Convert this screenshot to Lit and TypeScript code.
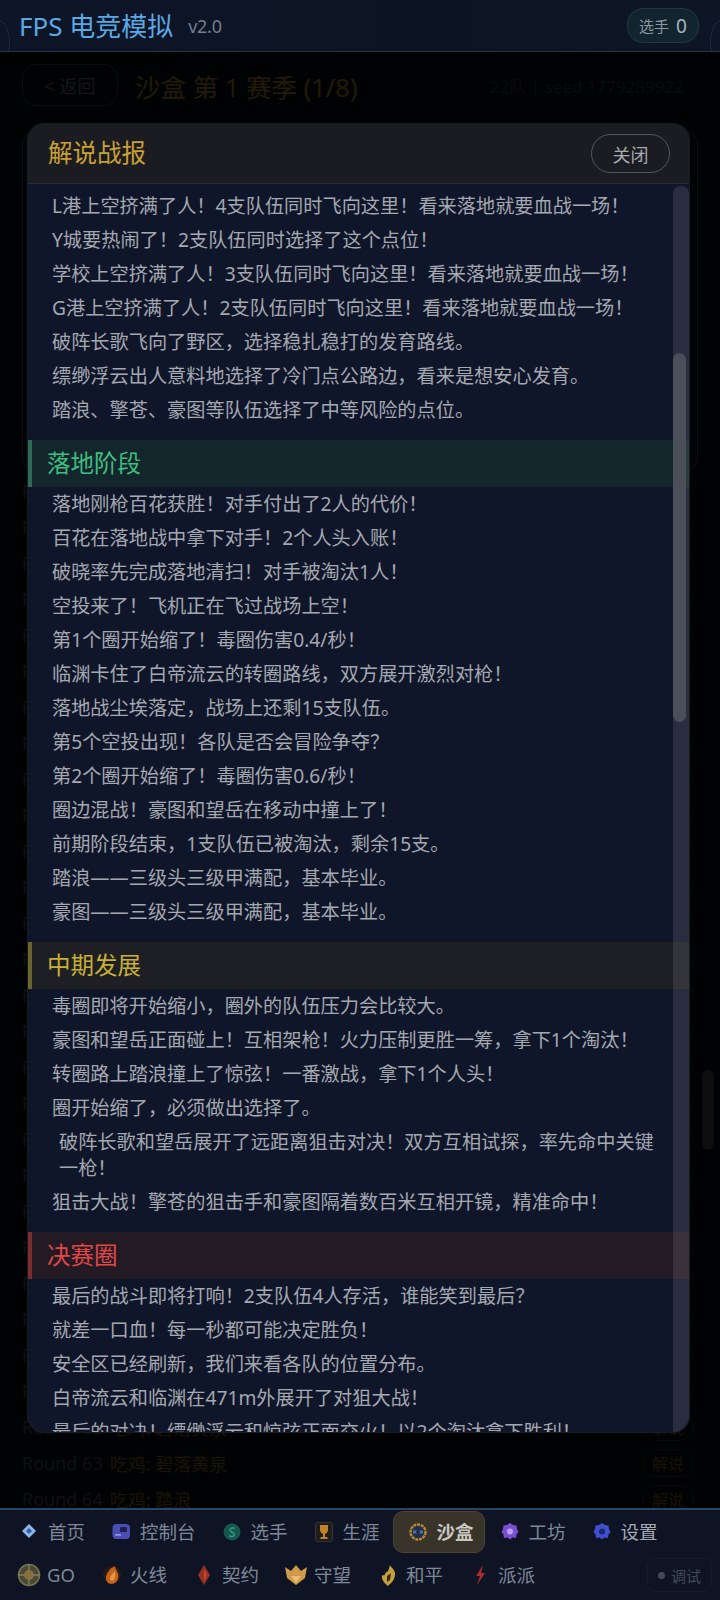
import { LitElement, html, css, svg } from "lit";
import { customElement } from "lit/decorators.js";

const ICONS: Record<string, unknown> = {
  home: svg`<path d="M9 2 16 9 9 16 2 9Z" fill="#8db6e6"/><path d="M9 6 12 9 9 12 6 9Z" fill="#2f5fa8"/>`,
  console: svg`<rect x="0.5" y="2" width="17.5" height="15" rx="4" fill="#4a4db4"/><rect x="8" y="5" width="7" height="5" rx="1" fill="#1e2050"/><rect x="3" y="12" width="6" height="1.8" fill="#8d90e0"/>`,
  player: svg`<circle cx="9" cy="10" r="8.5" fill="#17564c"/><path d="M12 6.5C9 4.8 5.5 7 8 9.5L10.5 11C13 13.5 9 16 6 13.5" fill="none" stroke="#2f8f7c" stroke-width="1.8"/>`,
  career: svg`<rect x="0.5" y="0.5" width="17" height="19" rx="2" fill="#1f1c1a" stroke="#33343c"/><path d="M5 3H13V8C13 10.5 11 11.5 10 12V15H12.5V17H5.5V15H8V12C7 11.5 5 10.5 5 8Z" fill="#c08428"/>`,
  sandbox: svg`<circle cx="9" cy="10" r="7.5" fill="#26304c" stroke="#b9892c" stroke-width="2.4" stroke-dasharray="3 .8"/><rect x="4" y="8.5" width="10" height="3" fill="#3f74ac"/><circle cx="9" cy="10" r="1.8" fill="#18203a"/>`,
  workshop: svg`<path d="M9 1 12 3 15.5 3.5 16 7 17.5 10 15.5 12.5 15 16 11.5 15.5 9 17.5 6.5 15.5 3 16 2.5 12.5 .5 10 2 7 2.5 3.5 6 3Z" fill="#7a4ed2"/><circle cx="9" cy="9.5" r="3" fill="#b9a4ea"/>`,
  settings: svg`<path d="M9 1 12 3 15.5 3.5 16 7 17.5 10 15.5 12.5 15 16 11.5 15.5 9 17.5 6.5 15.5 3 16 2.5 12.5 .5 10 2 7 2.5 3.5 6 3Z" fill="#3f4fd0"/><circle cx="9" cy="9.5" r="3" fill="#1c2668"/>`,
  go: svg`<circle cx="12" cy="12" r="10.5" fill="#4a4a34" stroke="#70724e" stroke-width="1.6"/><path d="M12 1V23M1 12H23" stroke="#7c8058" stroke-width="1.4"/><circle cx="12" cy="12" r="5" fill="#8b6f44"/>`,
  fire: svg`<circle cx="12" cy="12" r="9" fill="#2a1a14"/><path d="M8 20C3 14 8 10 10 6L15 3C15 7 20 10 18 16 17 19 14 21 11 21Z" fill="#c2611c"/><path d="M10 17C9 13 13 11 15 8 16 12 15 16 13 18Z" fill="#e89440"/>`,
  deal: svg`<path d="M12 2 18 12 12 22 6 12Z" fill="#96301f"/><path d="M12 6 15 12 12 18Z" fill="#c2482f"/>`,
  watch: svg`<path d="M1 4 7 8 12 2 17 8 23 4 21 15 12 22 3 15Z" fill="#cf9a4c"/><path d="M7 13H17L12 20Z" fill="#e9bc72"/>`,
  peace: svg`<path d="M14 2C15 5 19 6 19 11 19 17 15 20 12 23 10 21 5 18 6 12 8 13 9 12 10 9 12 10 13 6 14 2Z" fill="#c6a03c"/><path d="M11 13 15 10 14 17 11 19Z" fill="#3a2a14"/>`,
  pai: svg`<path d="M15 2 8 13H12L9 22 17 10H13Z" fill="#b02a2c"/>`,
};

const BLOCKS: { title?: string; tone?: string; lines: string[] }[] = [
  {
    lines: [
      "L港上空挤满了人!4支队伍同时飞向这里!看来落地就要血战一场!",
      "Y城要热闹了!2支队伍同时选择了这个点位!",
      "学校上空挤满了人!3支队伍同时飞向这里!看来落地就要血战一场!",
      "G港上空挤满了人!2支队伍同时飞向这里!看来落地就要血战一场!",
      "破阵长歌飞向了野区,选择稳扎稳打的发育路线。",
      "缥缈浮云出人意料地选择了冷门点公路边,看来是想安心发育。",
      "踏浪、擎苍、豪图等队伍选择了中等风险的点位。",
    ],
  },
  {
    title: "落地阶段",
    tone: "green",
    lines: [
      "落地刚枪百花获胜!对手付出了2人的代价!",
      "百花在落地战中拿下对手!2个人头入账!",
      "破晓率先完成落地清扫!对手被淘汰1人!",
      "空投来了!飞机正在飞过战场上空!",
      "第1个圈开始缩了!毒圈伤害0.4/秒!",
      "临渊卡住了白帝流云的转圈路线,双方展开激烈对枪!",
      "落地战尘埃落定,战场上还剩15支队伍。",
      "第5个空投出现!各队是否会冒险争夺?",
      "第2个圈开始缩了!毒圈伤害0.6/秒!",
      "圈边混战!豪图和望岳在移动中撞上了!",
      "前期阶段结束,1支队伍已被淘汰,剩余15支。",
      "踏浪——三级头三级甲满配,基本毕业。",
      "豪图——三级头三级甲满配,基本毕业。",
    ],
  },
  {
    title: "中期发展",
    tone: "yellow",
    lines: [
      "毒圈即将开始缩小,圈外的队伍压力会比较大。",
      "豪图和望岳正面碰上!互相架枪!火力压制更胜一筹,拿下1个淘汰!",
      "转圈路上踏浪撞上了惊弦!一番激战,拿下1个人头!",
      "圈开始缩了,必须做出选择了。",
      "破阵长歌和望岳展开了远距离狙击对决!双方互相试探,率先命中关键一枪!",
      "狙击大战!擎苍的狙击手和豪图隔着数百米互相开镜,精准命中!",
    ],
  },
  {
    title: "决赛圈",
    tone: "red",
    lines: [
      "最后的战斗即将打响!2支队伍4人存活,谁能笑到最后?",
      "就差一口血!每一秒都可能决定胜负!",
      "安全区已经刷新,我们来看各队的位置分布。",
      "白帝流云和临渊在471m外展开了对狙大战!",
      "最后的对决!缥缈浮云和惊弦正面交火!以2个淘汰拿下胜利!",
    ],
  },
];

const fullWidth = (s: string) =>
  s.replace(/!/g, "\uFF01").replace(/,/g, "\uFF0C").replace(/\?/g, "\uFF1F");

const NAV1 = [
  ["home", "首页"],
  ["console", "控制台"],
  ["player", "选手"],
  ["career", "生涯"],
  ["sandbox", "沙盒"],
  ["workshop", "工坊"],
  ["settings", "设置"],
];
const NAV2 = [
  ["go", "GO"],
  ["fire", "火线"],
  ["deal", "契约"],
  ["watch", "守望"],
  ["peace", "和平"],
  ["pai", "派派"],
];
const WINNERS = ["百花", "破晓", "踏浪", "望岳", "豪图", "擎苍", "惊弦", "临渊", "碧落黄泉"];

@customElement("app-root")
export class AppRoot extends LitElement {
  static styles = css`
    :host {
      display: block;
      width: 720px;
      height: 1600px;
      font-family: "Noto Sans", "Noto Sans CJK SC", sans-serif;
      background: #0a0e18;
      overflow: hidden;
    }
    .app { height: 1600px; display: flex; flex-direction: column; }
    .top {
      height: 52px;
      flex: none;
      box-sizing: border-box;
      border-bottom: 1px solid #24344e;
      background: linear-gradient(90deg, #0d1526, #0c1424 60%, #0e1626);
      display: flex;
      align-items: center;
      padding: 0 21px 0 19px;
      position: relative;
      overflow: hidden;
      z-index: 3;
    }
    .top::before, .top::after {
      content: "";
      position: absolute;
      bottom: -14px;
      width: 26px;
      height: 44px;
      border: 1px solid #1e2a40;
      border-radius: 50%;
    }
    .top::before { left: -18px; }
    .top::after { right: -18px; }
    .brand { font-size: 26px; color: #5aa8e4; line-height: 1; }
    .ver { font-size: 18px; color: #727d90; margin-left: 15px; letter-spacing: -0.3px; }
    .count {
      margin-left: auto;
      width: 72px;
      height: 35px;
      box-sizing: border-box;
      border: 1px solid #1c3a44;
      border-radius: 16px;
      background: #12252f;
      color: #8a98a4;
      font-size: 15px;
      display: flex;
      align-items: center;
      justify-content: center;
      gap: 7px;
    }
    .count b { font-weight: 400; font-size: 19px; color: #a9b4bd; }
    main { flex: 1; position: relative; overflow: hidden; }
    .page { padding: 12px 22px 0; }
    .bar { display: flex; align-items: center; height: 42px; }
    .back {
      width: 96px;
      height: 42px;
      box-sizing: border-box;
      border: 1px solid #4a5670;
      border-radius: 14px;
      color: #7b879c;
      font-size: 18px;
      display: flex;
      align-items: center;
      justify-content: center;
    }
    .ptitle { font-size: 25.5px; color: #c9a030; margin-left: 17px; }
    .seed { margin-left: auto; margin-right: 14px; font-size: 17px; color: #3c414e; }
    .card {
      height: 340px;
      margin-top: 24px;
      border: 1px solid #4a5670;
      border-radius: 14px;
      background: #141b2c;
    }
    .rows { margin-top: 1px; }
    .row { height: 36px; display: flex; align-items: center; font-size: 18px; color: #5a6478; }
    .row em { font-style: normal; color: #9a7c24; margin-left: 7px; }
    .row span { margin-left: auto; margin-right: 4px; width: 52px; height: 28px; box-sizing: border-box;
      border: 1px solid #3c3626; border-radius: 14px; color: #8a7024; font-size: 16px;
      display: flex; align-items: center; justify-content: center; }
    .pagebar {
      position: absolute;
      left: 702px;
      top: 1018px;
      width: 12px;
      height: 80px;
      border-radius: 6px;
      background: #5a5a5a;
    }
    .overlay {
      position: absolute;
      inset: 0;
      background: rgba(0, 0, 0, 0.84);
      padding: 72px 31px 76px 28px;
      box-sizing: border-box;
      display: flex;
    }
    .modal {
      flex: 1;
      position: relative;
      border-radius: 16px;
      overflow: hidden;
      background: #10162a;
      display: flex;
      flex-direction: column;
      box-shadow: 0 0 0 1px #1b1c20;
    }
    .mhead {
      height: 60px;
      flex: none;
      box-sizing: border-box;
      background: #1b1c22;
      border-bottom: 1px solid #2c2c2c;
      display: flex;
      align-items: center;
      justify-content: space-between;
      padding: 0 19px 0 20px;
    }
    .mtitle { font-size: 24.5px; color: #c9a032; line-height: 1; }
    .close {
      width: 79px;
      height: 39px;
      box-sizing: border-box;
      border: 1.5px solid #55565c;
      border-radius: 20px;
      color: #a8a9ac;
      font-size: 18px;
      display: flex;
      align-items: center;
      justify-content: center;
    }
    .mbody { flex: 1; overflow: hidden; padding-top: 5px; }
    .block + .block { margin-top: 13px; }
    .band {
      height: 47px;
      box-sizing: border-box;
      display: flex;
      align-items: center;
      padding-left: 15px;
      font-size: 23.5px;
      line-height: 1;
      border-left: 4px solid;
    }
    .green { color: #3fbd80; background: #13262b; border-color: #2f6a58; }
    .yellow { color: #c9b034; background: #1e1f24; border-color: #6a6430; }
    .red { color: #e04848; background: #241a24; border-color: #7a2c30; }
    .line {
      font-size: 19.2px;
      line-height: 26px;
      padding: 4px 30px 4px 24px;
      color: #a4a8b0;
    }
    .line.wrap { padding-left: 31px; }
    .track {
      position: absolute;
      right: 0;
      top: 62px;
      bottom: 0;
      width: 16px;
      border-radius: 7px 7px 0 0;
      background: rgba(255, 255, 255, 0.1);
    }
    .thumb {
      position: absolute;
      left: 0;
      top: 167px;
      width: 13px;
      height: 369px;
      border-radius: 7px;
      background: #4a4f5a;
    }
    nav {
      height: 92px;
      flex: none;
      box-sizing: border-box;
      background: #0e1424;
      border-top: 2px solid #2a4468;
      position: relative;
      z-index: 3;
      padding-top: 1px;
    }
    .nrow { display: flex; align-items: center; }
    .r1 { height: 42px; padding-left: 8px; gap: 4px; }
    .r2 { height: 44px; padding: 0 8px 0 17px; gap: 25px; }
    .item { display: flex; align-items: center; color: #7f8898; font-size: 18.5px; line-height: 1; }
    .r1 .item { height: 42px; padding: 0 11px 0 12px; gap: 10px; border-radius: 10px; box-sizing: border-box; }
    .r1 .item.on { background: #38342a; border: 1px solid #4a4434; color: #c9c8c0; font-weight: 700; padding: 0 10px 0 15px; margin: 0 0 0 -2px; }
    .r1 .item.bright { color: #a4a9b4; }
    .r2 .item { gap: 6px; }
    .r2 .item svg { width: 24px; height: 24px; }
    .r1 .item svg { width: 18px; height: 20px; }
    .debug {
      margin-left: auto;
      width: 65px;
      height: 34px;
      box-sizing: border-box;
      border: 1px solid #161c2c;
      border-radius: 8px;
      color: #434958;
      font-size: 15px;
      display: flex;
      align-items: center;
      justify-content: center;
      gap: 6px;
    }
    .debug i { width: 7px; height: 7px; border-radius: 50%; background: #434958; }
  `;

  private icon(name: string, box: string) {
    return html`<svg viewBox=${box} aria-hidden="true">${ICONS[name]}</svg>`;
  }

  render() {
    const rounds = Array.from({ length: 29 }, (_, i) => 36 + i);
    return html`<div class="app">
      <header class="top">
        <span class="brand">FPS 电竞模拟</span><span class="ver">v2.0</span>
        <div class="count">选手<b>0</b></div>
      </header>
      <main>
        <div class="page">
          <div class="bar">
            <div class="back">&lt; 返回</div>
            <div class="ptitle">沙盒 第 1 赛季 (1/8)</div>
            <div class="seed">22队 | seed 1779289922</div>
          </div>
          <div class="card"></div>
          <div class="rows">
            ${rounds.map(
              (n) => html`<div class="row">
                Round ${n}<em>吃鸡: ${n === 64 ? "踏浪" : n === 63 ? "碧落黄泉" : WINNERS[n % WINNERS.length]}</em>
                <span>解说</span>
              </div>`
            )}
          </div>
        </div>
        <div class="pagebar"></div>
        <div class="overlay">
          <section class="modal">
            <div class="mhead">
              <div class="mtitle">解说战报</div>
              <div class="close">关闭</div>
            </div>
            <div class="mbody">
              ${BLOCKS.map(
                (b) => html`<div class="block">
                  ${b.title ? html`<div class="band ${b.tone}">${b.title}</div>` : ""}
                  ${b.lines.map(
                    (l) => html`<div class="line ${l.startsWith("破阵长歌和") ? "wrap" : ""}">${fullWidth(l)}</div>`
                  )}
                </div>`
              )}
            </div>
            <div class="track"><div class="thumb"></div></div>
          </section>
        </div>
      </main>
      <nav>
        <div class="nrow r1">
          ${NAV1.map(
            ([ic, t]) => html`<div class="item ${ic === "sandbox" ? "on" : ""} ${ic === "settings" ? "bright" : ""}">
              ${this.icon(ic, "0 0 18 20")}<span>${t}</span>
            </div>`
          )}
        </div>
        <div class="nrow r2">
          ${NAV2.map(([ic, t]) => html`<div class="item">${this.icon(ic, "0 0 24 24")}<span>${t}</span></div>`)}
          <div class="debug"><i></i>调试</div>
        </div>
      </nav>
    </div>`;
  }
}
